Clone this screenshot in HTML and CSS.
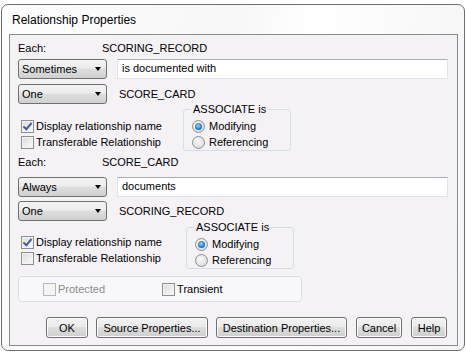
FILE: index.html
```html
<!DOCTYPE html>
<html lang="en">
<head>
  <meta charset="UTF-8" />
  <title>Relationship Properties</title>
  <link rel="stylesheet" href="styles.css">
</head>
<body>
  <div class="window">
    <div class="title">Relationship Properties</div>

    <div class="panel">
      <div class="section">
        <div class="each-row">
          <span class="each-label">Each:</span>
          <span>SCORING_RECORD</span>
        </div>
        <div class="ctl-row">
          <div class="combo">Sometimes<i class="arrow"></i></div>
          <div class="textbox">is documented with</div>
        </div>
        <div class="ctl-row gap5">
          <div class="combo">One<i class="arrow"></i></div>
          <span class="entity">SCORE_CARD</span>
        </div>
        <div class="opts">
          <div class="checks">
            <div class="check-row"><span class="cb checked"></span>Display relationship name</div>
            <div class="check-row"><span class="cb"></span>Transferable Relationship</div>
          </div>
          <fieldset class="group">
            <legend>ASSOCIATE is</legend>
            <div class="radio-row"><span class="rb on"></span>Modifying</div>
            <div class="radio-row"><span class="rb"></span>Referencing</div>
          </fieldset>
        </div>
      </div>

      <div class="section second">
        <div class="each-row">
          <span class="each-label">Each:</span>
          <span>SCORE_CARD</span>
        </div>
        <div class="ctl-row gap8">
          <div class="combo">Always<i class="arrow"></i></div>
          <div class="textbox">documents</div>
        </div>
        <div class="ctl-row gap4">
          <div class="combo">One<i class="arrow"></i></div>
          <span class="entity">SCORING_RECORD</span>
        </div>
        <div class="opts">
          <div class="checks">
            <div class="check-row"><span class="cb checked"></span>Display relationship name</div>
            <div class="check-row"><span class="cb"></span>Transferable Relationship</div>
          </div>
          <fieldset class="group wide">
            <legend>ASSOCIATE is</legend>
            <div class="radio-row"><span class="rb on"></span>Modifying</div>
            <div class="radio-row"><span class="rb"></span>Referencing</div>
          </fieldset>
        </div>
      </div>

      <div class="flags">
        <div class="check-row disabled"><span class="cb"></span>Protected</div>
        <div class="check-row transient"><span class="cb"></span>Transient</div>
      </div>

      <div class="buttons">
        <button class="btn-ok">OK</button>
        <button class="btn-src">Source Properties...</button>
        <button class="btn-dst">Destination Properties...</button>
        <button class="btn-cancel">Cancel</button>
        <button class="btn-help">Help</button>
      </div>
    </div>
  </div>
</body>
</html>
```

FILE: styles.css
```css
body {
  margin: 0;
  background: #fff;
  font-family: "Liberation Sans", Arial, sans-serif;
  font-size: 11px;
  color: #000;
}
.window {
  margin: 4px 1px 0 1px;
  width: 462px;
  border: 1px solid #6e6e6e;
  border-radius: 7px;
  padding-bottom: 4px;
  background: linear-gradient(100deg, #fdfdfd 0%, #f7f7f8 45%, #ffffff 60%, #f4f4f6 100%);
}
.title {
  font-size: 12px;
  line-height: 14px;
  padding: 8px 0 7px 10px;
  color: #000;
}
.panel {
  margin: 0 6px 0 7px;
  border: 1px solid #8c8c8c;
  background: #f5f2f6;
  padding: 6px 9px 7px 8px;
}
.each-row {
  display: flex;
  line-height: 14px;
}
.each-label {
  width: 84px;
}
.ctl-row {
  display: flex;
  align-items: center;
  margin-top: 4px;
}
.gap5 { margin-top: 5px; }
.gap8 { margin-top: 8px; }
.gap4 { margin-top: 4px; }
.combo {
  width: 84px;
  height: 18px;
  border: 1px solid #707070;
  border-radius: 3px;
  background: linear-gradient(#f3f3f3 0%, #ececec 45%, #dedede 50%, #d0d0d0 100%);
  display: flex;
  align-items: center;
  padding-left: 3px;
  line-height: 14px;
}
.arrow {
  margin-left: auto;
  margin-right: 5px;
  width: 0;
  height: 0;
  border-left: 3.5px solid transparent;
  border-right: 3.5px solid transparent;
  border-top: 4px solid #000;
}
.textbox {
  flex: 1;
  margin-left: 10px;
  height: 18px;
  line-height: 17px;
  border: 1px solid #e2e3ea;
  border-top-color: #abadb3;
  background: #fff;
  padding-left: 4px;
}
.entity {
  margin-left: 12px;
}
.opts {
  display: flex;
  margin-top: -2px;
}
.checks {
  width: 165px;
  padding-top: 16px;
}
.check-row, .radio-row {
  display: flex;
  align-items: center;
  height: 16px;
}
.cb {
  width: 11px;
  height: 11px;
  margin: 0 2px 0 3px;
  border: 1px solid #8e8f8f;
  background: linear-gradient(135deg, #dcdcdc, #fafafa);
  box-shadow: inset 0 0 0 1px #f4f4f4;
  position: relative;
}
.cb.checked::after {
  content: "";
  position: absolute;
  left: 3px;
  top: 0px;
  width: 3px;
  height: 7px;
  border-right: 2px solid #4a5f97;
  border-bottom: 2px solid #4a5f97;
  transform: rotate(40deg);
}
.group {
  margin: 0;
  padding: 2px 8px 0 8px;
  width: 90px;
  border: 1px solid #d5dfe5;
  border-radius: 3px;
}
.group legend {
  padding: 0 2px;
  margin-left: -1px;
  line-height: 14px;
}
.group.wide {
  margin-left: 3px;
  width: 90px;
}
.rb {
  width: 11px;
  height: 11px;
  margin-right: 4px;
  border: 1px solid #8e8f8f;
  border-radius: 50%;
  background: radial-gradient(circle at 40% 35%, #fafafa, #d4d4d4);
  position: relative;
}
.rb.on::after {
  content: "";
  position: absolute;
  left: 2px;
  top: 2px;
  width: 7px;
  height: 7px;
  border-radius: 50%;
  background: radial-gradient(circle at 45% 40%, #9fd7fb 0%, #2a7fd4 55%, #0e3e8a 100%);
}
.second {
  margin-top: 4px;
}
.second .opts {
  margin-top: -1px;
}
.second .checks {
  padding-top: 14px;
}
.flags {
  margin-top: 7px;
  width: 261px;
  height: 24px;
  border: 1px solid #d9dfe6;
  border-radius: 4px;
  background: #f8f7f9;
  display: flex;
  align-items: center;
  padding-left: 21px;
}
.disabled {
  color: #8d8d8d;
}
.disabled .cb {
  border-color: #b9b9b9;
  background: #f4f4f4;
}
.transient {
  margin-left: 54px;
}
.buttons {
  display: flex;
  margin-top: 15px;
  padding-left: 28px;
}
button {
  font-family: "Liberation Sans", Arial, sans-serif;
  font-size: 11px;
  height: 21px;
  padding: 0;
  border: 1px solid #707070;
  border-radius: 3px;
  background: linear-gradient(#f2f2f2 0%, #ebebeb 45%, #dddddd 50%, #cfcfcf 100%);
  box-shadow: inset 0 0 0 1px #fcfcfc;
  color: #000;
}
.btn-ok { width: 42px; }
.btn-src { width: 112px; margin-left: 8px; }
.btn-dst { width: 131px; margin-left: 8px; }
.btn-cancel { width: 46px; margin-left: 9px; }
.btn-help { width: 36px; margin-left: 9px; }
```
